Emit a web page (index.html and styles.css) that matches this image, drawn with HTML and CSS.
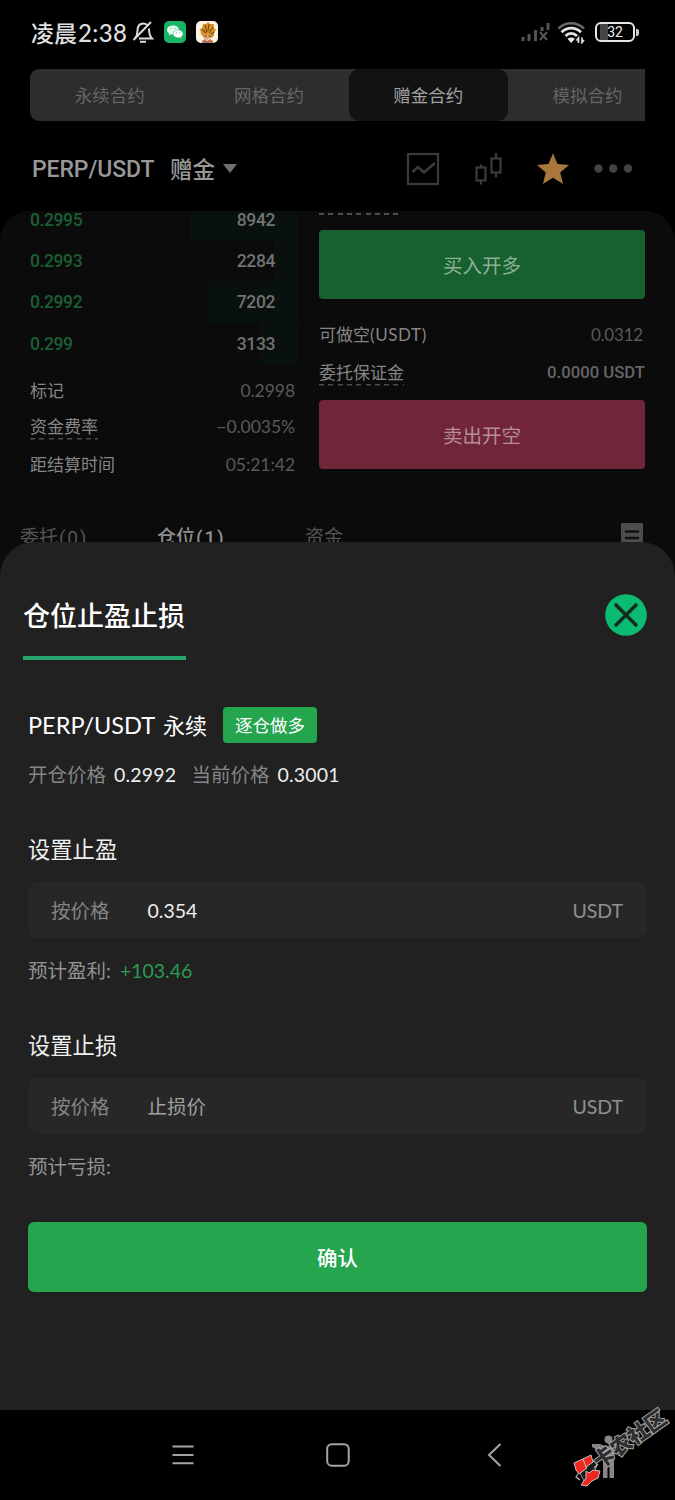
FILE: index.html
```html
<!DOCTYPE html>
<html lang="zh-CN">
<head>
<meta charset="utf-8">
<title>仓位止盈止损</title>
<link rel="stylesheet" href="styles.css">
</head>
<body>
<div class="phone">
  <header class="status">
    <span class="clock">凌晨<span class="clock-num">2:38</span></span>
    <svg class="bell" width="22" height="24" viewBox="0 0 22 24" fill="none" stroke="#dcdcdc" stroke-width="2"><path d="M3 18.500C5 16 5.500 14 5.500 10.500C5.500 6 8 3.500 11.500 3.500C13 3.500 14 4 15 4.800M17 8.500C17 14 17.500 16 20 18.500H7M1.500 20L19 2"/><path d="M8 21.800h6"/></svg>
    <svg class="wechat" width="22" height="22" viewBox="0 0 22 22"><rect width="22" height="22" rx="5" fill="#17b565"/><path d="M9 4.500c-3.500 0-6 2-6 4.600 0 1.500.9 2.700 2.200 3.500l-.6 1.800 2.200-1.100c.7.200 1.400.3 2.200.3 3.500 0 6-2 6-4.500S12.500 4.500 9 4.500z" fill="#e8fff0"/><path d="M14 8.800c-2.900 0-5 1.700-5 4s2.100 4 5 4c.6 0 1.200-.1 1.700-.2l1.900.9-.5-1.600c1.200-.7 1.900-1.800 1.900-3.100 0-2.300-2.100-4-5-4z" fill="#fff" stroke="#17b565" stroke-width=".5"/><path d="M7 7.500h.1M11 7.500h.1M12.300 11.800h.1M15.700 11.800h.1" stroke="#17b565" stroke-width="1" stroke-linecap="round"/></svg>
    <svg class="game" width="22" height="22" viewBox="0 0 22 22"><rect width="22" height="22" rx="5" fill="#fbf3e6"/><path d="M5 13L4 8l2-1 1-4 3 0 2-2 2 2 4 0 0 4 2 2-2 3 0 3-3 2H8z" fill="#d99325"/><path d="M6 8l4 4M9 4l2 7M13 3l-1 7M17 6l-4 6M18 11l-4 3" stroke="#7b4812" stroke-width="1.100"/><path d="M8 13h7l-1 4-3 2-3-2z" fill="#e5a070"/><path d="M8.500 15h2M12.500 15h2" stroke="#50260f" stroke-width="1.200"/><path d="M6 20l3-2 2 2 3-2 3 2v2H6z" fill="#c96e46"/><path d="M9 20l2 1 2-1v2H9z" fill="#7180a3"/></svg>
    <span class="grow"></span>
    <svg class="signal" width="30" height="22" viewBox="0 0 30 22" fill="none" stroke="#545454" stroke-width="3"><path d="M3 20v-4M9 20v-7M15.500 20V9M22 10V6M28 9V2"/><path d="M20 11l7 8M27 11l-7 8" stroke-width="2.200"/></svg>
    <svg class="wifi" width="29" height="23" viewBox="0 0 29 23" fill="none"><path d="M1.500 7.500C8.500 .500 19.500 .500 27 7.500" stroke="#6a6a6a" stroke-width="2.600"/><path d="M4.500 11.200C10 5.700 18.500 5.700 24 11.200M8.500 15C12 11.500 16.500 11.500 20 15" stroke="#e6e6e6" stroke-width="2.700"/><path d="M10.500 17.700q3.700-2.600 7.400 0L14.200 22z" fill="#e6e6e6"/><path d="M21.500 22v-5l-2 2.500M25 16.500v5l2-2.500" stroke="#ddd" stroke-width="1.700"/></svg>
    <span class="battery"><span class="battery-body">32</span><span class="battery-tip"></span></span>
  </header>

  <nav class="tabs">
    <span class="tab">永续合约</span><span class="tab">网格合约</span><span class="tab tab-on">赠金合约</span><span class="tab tab-last">模拟合约</span>
  </nav>

  <section class="pair">
    <span class="pair-name">PERP/USDT</span><span class="pair-kind">赠金</span><span class="caret"></span>
    <span class="grow"></span>
    <svg class="tool" width="242" height="40" viewBox="0 0 242 40" fill="none" stroke="#3b3b3b" stroke-width="2.200"><rect x="6" y="5" width="30" height="30"/><path d="M10.500 23L16 18l6 5.500L33 14" stroke-width="2.600"/><rect x="74.500" y="18.500" width="9" height="13"/><path d="M79 15.500v3M79 31.500v4M94 4v6M94 23.500v5"/><rect x="89.500" y="9.500" width="9" height="14"/><path d="M151 4.300l4.500 10.800 11.600.9-8.900 7.500 2.900 11.500-10.100-6.200-10.100 6.200 2.900-11.500-8.900-7.500 11.600-.9z" fill="#a7773b" stroke="none"/><g fill="#424242" stroke="none"><circle cx="196.500" cy="19.500" r="4.200"/><circle cx="211.200" cy="19.500" r="4.200"/><circle cx="226" cy="19.500" r="4.200"/></g></svg>
  </section>

  <main class="trade">
    <div class="columns">
      <div class="book">
        <div class="level level-a"><span class="price">0.2995</span><span class="amount">8942</span></div>
        <div class="level level-b"><span class="price">0.2993</span><span class="amount">2284</span></div>
        <div class="level level-c"><span class="price">0.2992</span><span class="amount">7202</span></div>
        <div class="level level-d"><span class="price">0.299</span><span class="amount">3133</span></div>
        <div class="fact fact-mark"><span>标记</span><span class="fact-num">0.2998</span></div>
        <div class="fact"><span class="dashed">资金费率</span><span class="fact-num">−0.0035%</span></div>
        <div class="fact"><span>距结算时间</span><span class="fact-num">05:21:42</span></div>
      </div>
      <div class="order">
        <span class="dash-tail"></span>
        <div class="big buy">买入开多</div>
        <div class="fact fact-short"><span>可做空<span class="lat">(USDT)</span></span><span class="fact-num short-num">0.0312</span></div>
        <div class="fact"><span class="dashed">委托保证金</span><span class="margin-num">0.0000 USDT</span></div>
        <div class="big sell">卖出开空</div>
      </div>
    </div>
    <div class="lists">
      <span class="list-a">委托<span class="count">(0)</span></span><span class="list-b">仓位<span class="count">(1)</span></span><span class="list-c">资金</span>
      <svg class="doc" width="22" height="26" viewBox="0 0 22 26"><path d="M0 0h22v26H0z" fill="#4c4c4c"/><path d="M5 8.500h12M5 15h12" stroke="#101010" stroke-width="2.500" stroke-linecap="round"/></svg>
    </div>
  </main>

  <section class="sheet">
    <div class="sheet-head">
      <h1 class="title">仓位止盈止损</h1>
      <svg class="close" width="42" height="42" viewBox="0 0 42 42"><circle cx="21" cy="21" r="20.800" fill="#0bbb72"/><path d="M11 11l20 20M31 11L11 31" stroke="#152b20" stroke-width="3.600" stroke-linecap="round"/></svg>
    </div>
    <div class="symbol"><span class="symbol-name">PERP/USDT</span><span class="symbol-kind">永续</span><span class="badge">逐仓做多</span></div>
    <div class="prices"><span class="muted">开仓价格</span><span class="num open">0.2992</span><span class="muted">当前价格</span><span class="num">0.3001</span></div>
    <h2 class="sub">设置止盈</h2>
    <div class="field"><span class="by">按价格</span><span class="num value">0.354</span><span class="unit">USDT</span></div>
    <div class="estimate">预计盈利: <span class="gain">+103.46</span></div>
    <h2 class="sub">设置止损</h2>
    <div class="field"><span class="by">按价格</span><span class="value hint">止损价</span><span class="unit">USDT</span></div>
    <div class="estimate">预计亏损:</div>
    <div class="confirm">确认</div>
  </section>

  <footer class="navbar">
    <svg width="24" height="24" viewBox="0 0 24 24" fill="none" stroke="#a5a5a5" stroke-width="2"><path d="M1.500 3.500h21M1.500 12h21M1.500 20.300h21"/></svg>
    <svg class="home" width="24" height="24" viewBox="0 0 24 24" fill="none" stroke="#a5a5a5" stroke-width="2"><rect x="1.200" y="1.200" width="21.500" height="21.500" rx="4.500"/></svg>
    <svg width="24" height="24" viewBox="0 0 24 24" fill="none" stroke="#a5a5a5" stroke-width="2"><path d="M17.500 1L6 12l11.500 11"/></svg>
  </footer>

  <div class="stamp">
    <svg class="stamp-art" width="100" height="90" viewBox="0 0 100 90"><g fill="#868686"><circle cx="38.500" cy="34.500" r="4"/><path d="M22 39h8l5 2h9v32h-4.500V59H37.500v14h-4.500V48l-11-6z"/></g><path d="M9 66l8-12 10 4-3 14-9 6z" fill="#181818" stroke="#999"/><g fill="#f02720" stroke="#c4c4c4" stroke-width="1" stroke-linejoin="round"><path d="M4 58l9-4 4 9-8 6-3-4z"/><path d="M13 54l8-4 2 7-7 5z"/><path d="M16 66l3 2 4-3 7 1-2 7-6 3-5 5-6-1 5-7z"/></g><path d="M8 69l-2 3 4 3M24 63l4-4" stroke="#bbb" stroke-width="1.200" fill="none"/></svg>
    <span class="stamp-text">卡农社区</span>
  </div>
</div>
</body>
</html>
```

FILE: styles.css
```css
* { box-sizing: border-box; }
body { margin: 0; background: #000; }
.phone {
  position: relative;
  width: 675px;
  height: 1500px;
  overflow: hidden;
  display: flex;
  flex-direction: column;
  background: #000;
  color: #fff;
  font-family: Lato, "Noto Sans CJK SC", sans-serif;
  white-space: nowrap;
}
.grow { flex: 1; }

/* status bar */
.status { height: 69px; padding: 0 36px 5px 31px; display: flex; align-items: center; flex: none; }
.clock { font: 500 23px/36px "Noto Sans CJK SC", sans-serif; color: #dedede; display: flex; }
.clock-num { font-family: Lato, sans-serif; font-size: 24px; line-height: 37px; margin-left: 1px; letter-spacing: .4px; }
.bell { margin-left: 5px; }
.wechat { margin-left: 10px; }
.game { margin-left: 10px; }
.signal { margin-right: 7px; }
.wifi { margin-right: 9px; }
.battery { display: flex; align-items: center; }
.battery-body {
  width: 40px; height: 20px; border: 2px solid #e6e6e6; border-radius: 6px;
  background: linear-gradient(90deg, #000 3px, #444 3px, #444 11px, #000 11px);
  font: 400 14px/16px Roboto, sans-serif; text-align: center; color: #eee;
}
.battery-tip { width: 3px; height: 7px; background: #ccc; border-radius: 0 2px 2px 0; margin-left: 1px; }

/* contract tabs */
.tabs {
  margin: 0 30px; height: 52px; flex: none; overflow: hidden; display: flex;
  background: #2d2d2d; border-radius: 9px 0 0 9px;
  font: 400 17.500px/51px "Noto Sans CJK SC", sans-serif; color: #656565;
}
.tab { width: 159.300px; flex: none; text-align: center; }
.tab-on { background: #121212; border-radius: 10px; color: #a2a2a2; }

.pair { height: 90px; flex: none; padding: 5px 27px 0 32px; display: flex; align-items: center; color: #989898; }
.pair-name { font: 500 23px/34px Roboto, sans-serif; letter-spacing: -.1px; padding-top: 3px; }
.pair-kind { font: 500 22.500px/34px "Noto Sans CJK SC", sans-serif; margin: -2px 0 0 15.500px; }
.caret { border: 7px solid transparent; border-top: 9px solid #707070; border-bottom: 0; margin: 0 0 0 8px; }
.tool { flex: none; margin: 0 4px 0 0; }

/* dimmed trading panel */
.trade { height: 400px; flex: none; overflow: hidden; background: #0b0b0b; border-radius: 30px 30px 0 0; font: 400 17px/30px Lato, "Noto Sans CJK SC", sans-serif; color: #858585; }
.columns { display: flex; gap: 21px; padding: 0 30px; }
.book { width: 268px; }
.level { height: 41.200px; line-height: 43px; display: flex; justify-content: space-between; padding-right: 23px; font-family: Roboto, sans-serif; font-weight: 500; font-size: 17.500px; letter-spacing: -.4px; background: linear-gradient(#08110d, #08110d) right / 108px 100% no-repeat; }
.level-a { height: 29.200px; line-height: 19px; }
.level-b { background-size: 24px 100%; }
.level-c { background-size: 91px 100%; }
.level-d { background-size: 38px 100%; }
.price { color: #195e34; }
.amount { color: #727272; }
.fact { display: flex; justify-content: space-between; height: 38px; line-height: 39px; }
.book .fact { padding-right: 3px; }
.fact-mark { margin-top: 7px; height: 36px; }
.fact-num { color: #5a5a5a; font-size: 17.500px; letter-spacing: -.05px; }
.short-num { font-size: 17px; letter-spacing: -.2px; padding-right: 2px; }
.lat { letter-spacing: .6px; }
.dashed { background: repeating-linear-gradient(90deg, #4c4c4c 0 5px, transparent 5px 9.300px) 0 31px / 100% 1.500px no-repeat; }
.order { width: 326px; display: flex; flex-direction: column; }
.dash-tail { height: 2px; width: 82px; margin: 2px 0 15px; background: repeating-linear-gradient(90deg, #4c4c4c 0 5px, transparent 5px 9.300px); }
.big { height: 69px; border-radius: 4px; text-align: center; font: 400 19.500px/69px "Noto Sans CJK SC", sans-serif; }
.buy { background: #17602f; color: #8db198; }
.sell { background: #702539; color: #b68d99; margin-top: 9px; }
.fact-short { margin-top: 16px; }
.margin-num { font: 500 16.700px/39px Roboto, sans-serif; color: #666; }
.lists { display: flex; padding: 0 32px 0 20px; margin-top: 36px; height: 36px; line-height: 36px; font-size: 19px; color: #555; }
.count { font-family: Roboto, sans-serif; font-size: 19px; letter-spacing: 1.800px; padding-left: 1px; }
.list-a { width: 137px; }
.list-b { width: 148px; color: #909090; font-weight: 500; }
.list-c { flex: 1; }
.doc { margin-top: 4px; }

/* take-profit / stop-loss sheet */
.sheet { position: absolute; left: 0; top: 542px; width: 675px; height: 868px; padding: 0 28px; background: #212121; border-radius: 34px 34px 0 0; }
.sheet-head { display: flex; justify-content: space-between; padding-top: 52px; margin-left: -5px; }
.title { margin: 0; width: 163px; height: 66px; border-bottom: 4px solid #26a66c; font: 500 27px/42px "Noto Sans CJK SC", sans-serif; }
.symbol { display: flex; align-items: center; margin-top: 47px; height: 36px; }
.symbol-name { font-size: 23.500px; line-height: 36px; }
.symbol-kind { font: 400 22px/34px "Noto Sans CJK SC", sans-serif; margin: -2px 16px 0 8px; }
.badge { width: 94px; height: 36px; border-radius: 4px; background: #26a54f; text-align: center; font: 400 17.500px/35px "Noto Sans CJK SC", sans-serif; }
.prices { display: flex; height: 30px; margin-top: 17px; font-size: 19.500px; line-height: 30px; }
.muted { color: #858585; margin-right: 8px; }
.open { margin-right: 15px; }
.num { color: #eee; }
.prices .num { letter-spacing: .2px; }
.sub { margin: 40px 0 0; font: 400 22.300px/36px "Noto Sans CJK SC", sans-serif; color: #efefef; }
.field { display: flex; height: 56px; margin-top: 16px; padding: 0 24px 0 23px; border-radius: 10px; background: #272727; font-size: 19.500px; line-height: 58px; }
.by { width: 96.500px; color: #858585; }
.value { flex: 1; }
.hint { color: #a0a0a0; }
.unit { color: #919191; }
.estimate { height: 30px; margin-top: 18px; font-size: 19.500px; line-height: 30px; color: #949494; }
.gain { color: #2b9b50; margin-left: 4px; }
.confirm { height: 70px; margin-top: 40px; border-radius: 6px; background: #26a54f; text-align: center; font: 500 20.500px/71px "Noto Sans CJK SC", sans-serif; }

/* system navigation */
.navbar { margin-top: auto; height: 90px; flex: none; padding: 0 168px 0 171px; display: flex; justify-content: space-between; align-items: center; }
.home { margin-right: 2px; }

/* community stamp */
.stamp { position: absolute; left: 570px; top: 1405px; width: 100px; height: 90px; }
.stamp-art { display: block; }
.stamp-text { position: absolute; left: 16px; top: 18px; width: 86px; text-align: center; font: 900 21px/30px "Noto Sans CJK SC", sans-serif; color: #2d2d2d; -webkit-text-stroke: 2px #a4a4a4; paint-order: stroke fill; transform: rotate(-35deg); }
```
